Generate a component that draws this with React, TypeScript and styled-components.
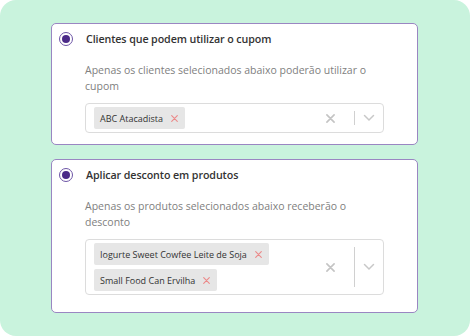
import React, { FunctionComponent } from 'react';
import styled, { createGlobalStyle } from 'styled-components';

const GlobalStyle = createGlobalStyle`
    html, body {
        margin: 0;
        padding: 0;
        background: #ffffff;
    }
    body {
        font-family: 'Open Sans', 'Noto Sans', sans-serif;
    }
`;

const Backdrop = styled.div`
    width: 470px;
    height: 336px;
    box-sizing: border-box;
    background: #c9f3dd;
    border-radius: 16px;
    padding: 23px 52px 23px 51px;
    display: flex;
    flex-direction: column;
    gap: 14px;
`;

const Card = styled.section<{ $bottom: number }>`
    box-sizing: border-box;
    background: #ffffff;
    border: 1px solid #9a86c2;
    border-radius: 5px;
    padding: 6px 33px ${(p) => p.$bottom}px 7px;
`;

const Header = styled.div`
    display: flex;
    align-items: center;
    gap: 13px;
    height: 18px;
`;

const Radio = styled.span`
    box-sizing: border-box;
    width: 14px;
    height: 14px;
    border-radius: 50%;
    border: 1.5px solid #6d55a6;
    display: flex;
    align-items: center;
    justify-content: center;
    flex-shrink: 0;

    &::after {
        content: '';
        width: 8px;
        height: 8px;
        border-radius: 50%;
        background: #4b2a88;
    }
`;

const Title = styled.h2`
    margin: 0;
    font-size: 10.7px;
    font-weight: 600;
    letter-spacing: -0.1px;
    line-height: 18px;
    color: #333333;
`;

const Body = styled.div`
    padding-left: 26px;
`;

const Description = styled.p`
    margin: 14px 0 9px;
    font-size: 10.5px;
    font-weight: 400;
    line-height: 16px;
    color: #808080;
`;

const SelectBox = styled.div`
    box-sizing: border-box;
    min-height: 30px;
    border: 1px solid #dcdcdc;
    border-radius: 4px;
    display: flex;
    align-items: stretch;
`;

const Values = styled.div`
    flex: 1;
    display: flex;
    flex-wrap: wrap;
    align-items: flex-start;
    align-content: flex-start;
    gap: 4px 4px;
    padding: 3px 8px;
`;

const Chip = styled.span`
    display: inline-flex;
    align-items: center;
    gap: 8px;
    height: 22px;
    padding: 0 7px 0 6px;
    background: #e6e6e6;
    border-radius: 2px;
    font-size: 9px;
    color: #333333;
    white-space: nowrap;
`;

const Indicators = styled.div`
    display: flex;
    align-items: center;
`;

const ClearButton = styled.span`
    display: flex;
    align-items: center;
    justify-content: center;
    width: 20px;
    margin-right: 14px;
`;

const Separator = styled.span`
    align-self: stretch;
    width: 1px;
    margin: 7px 0;
    background: #d0d0d0;
`;

const Chevron = styled.span`
    display: flex;
    align-items: center;
    justify-content: center;
    width: 28px;
`;

const Cross: FunctionComponent<{ size: number; color: string; stroke: number }> = ({
    size,
    color,
    stroke,
}) => (
    <svg width={size} height={size} viewBox="0 0 10 10">
        <path
            d="M1 1 L9 9 M9 1 L1 9"
            stroke={color}
            strokeWidth={stroke}
            strokeLinecap="round"
        />
    </svg>
);

interface IOption {
    title: string;
    description: string;
    values: string[];
    bottom: number;
}

const options: IOption[] = [
    {
        title: 'Clientes que podem utilizar o cupom',
        description:
            'Apenas os clientes selecionados abaixo poderão utilizar o cupom',
        values: ['ABC Atacadista'],
        bottom: 11,
    },
    {
        title: 'Aplicar desconto em produtos',
        description:
            'Apenas os produtos selecionados abaixo receberão o desconto',
        values: ['Iogurte Sweet Cowfee Leite de Soja', 'Small Food Can Ervilha'],
        bottom: 17,
    },
];

const App: FunctionComponent = () => (
    <>
        <GlobalStyle />
        <Backdrop>
            {options.map((opt) => (
                <Card key={opt.title} $bottom={opt.bottom}>
                    <Header>
                        <Radio />
                        <Title>{opt.title}</Title>
                    </Header>
                    <Body>
                        <Description>{opt.description}</Description>
                        <SelectBox>
                            <Values>
                                {opt.values.map((v) => (
                                    <Chip key={v}>
                                        {v}
                                        <Cross size={7} color="#ec8a8a" stroke={1.6} />
                                    </Chip>
                                ))}
                            </Values>
                            <Indicators>
                                <ClearButton>
                                    <Cross size={9} color="#c4c4c4" stroke={1.8} />
                                </ClearButton>
                                <Separator />
                                <Chevron>
                                    <svg width="12" height="8" viewBox="0 0 12 8">
                                        <path
                                            d="M1.5 1.5 L6 6 L10.5 1.5"
                                            fill="none"
                                            stroke="#c8c8c8"
                                            strokeWidth="1.5"
                                            strokeLinecap="round"
                                        />
                                    </svg>
                                </Chevron>
                            </Indicators>
                        </SelectBox>
                    </Body>
                </Card>
            ))}
        </Backdrop>
    </>
);

export default App;
